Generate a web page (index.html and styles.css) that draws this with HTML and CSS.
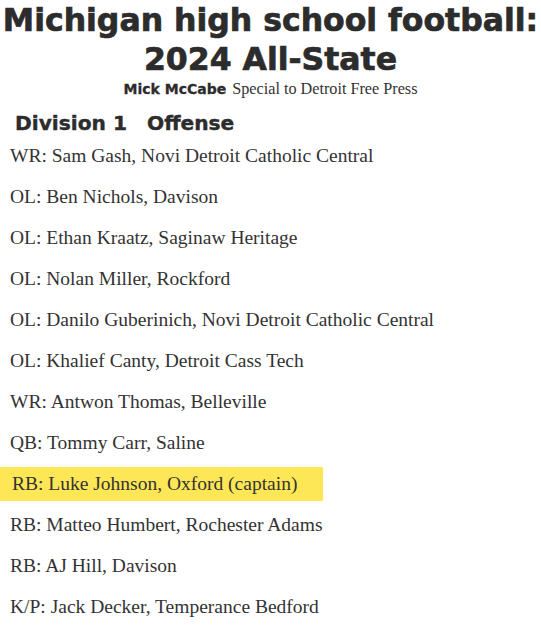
FILE: index.html
```html
<!DOCTYPE html>
<html>
<head>
<meta charset="utf-8">
<link rel="stylesheet" href="styles.css">
</head>
<body>
<header class="head">
  <h1 class="title"><span class="line">Michigan high school football:</span><span class="line">2024 All-State</span></h1>
  <p class="byline"><span class="author">Mick McCabe</span><span class="source">Special to Detroit Free Press</span></p>
</header>
<h2 class="section"><span>Division 1</span><span>Offense</span></h2>
<ul class="roster">
  <li class="row">WR: Sam Gash, Novi Detroit Catholic Central</li>
  <li class="row">OL: Ben Nichols, Davison</li>
  <li class="row">OL: Ethan Kraatz, Saginaw Heritage</li>
  <li class="row">OL: Nolan Miller, Rockford</li>
  <li class="row">OL: Danilo Guberinich, Novi Detroit Catholic Central</li>
  <li class="row">OL: Khalief Canty, Detroit Cass Tech</li>
  <li class="row">WR: Antwon Thomas, Belleville</li>
  <li class="row">QB: Tommy Carr, Saline</li>
  <li class="row captain"><span class="mark">RB: Luke Johnson, Oxford (captain)</span></li>
  <li class="row">RB: Matteo Humbert, Rochester Adams</li>
  <li class="row">RB: AJ Hill, Davison</li>
  <li class="row">K/P: Jack Decker, Temperance Bedford</li>
</ul>
</body>
</html>
```
FILE: styles.css
```css
html, body {
  margin: 0;
  padding: 0;
  background: #fff;
}
body {
  color: #333;
  width: 541px;
  overflow: hidden;
}
.head {
  text-align: center;
}
.title {
  margin: 0;
  padding-top: 1px;
  display: flex;
  flex-direction: column;
  align-items: center;
  font-family: "DejaVu Sans", sans-serif;
  font-weight: 700;
  font-size: 31.5px;
  color: #2c2c2c;
  -webkit-text-stroke: 0.7px #2c2c2c;
}
.line {
  display: block;
  height: 38px;
  line-height: 38px;
  white-space: nowrap;
}
.line + .line {
  margin-top: 1px;
}
.byline {
  margin: 2px 0 0;
  display: flex;
  justify-content: center;
  align-items: baseline;
  gap: 6px;
  line-height: 18px;
}
.author {
  font-family: "DejaVu Sans", sans-serif;
  font-weight: 700;
  font-size: 14px;
  color: #2c2c2c;
  -webkit-text-stroke: 0.3px #2c2c2c;
}
.source {
  font-family: "Liberation Serif", serif;
  font-size: 16.2px;
  color: #333;
}
.section {
  margin: 14px 0 0;
  padding-left: 15px;
  display: flex;
  gap: 20px;
  font-family: "DejaVu Sans", sans-serif;
  font-weight: 700;
  font-size: 20.2px;
  line-height: 23px;
  color: #2c2c2c;
  -webkit-text-stroke: 0.4px #2c2c2c;
}
.roster {
  list-style: none;
  margin: 0;
  padding: 0;
}
.row {
  height: 41px;
  display: flex;
  align-items: center;
  padding-left: 10px;
  font-family: "Liberation Serif", serif;
  font-size: 19.5px;
  color: #333;
}
.captain {
  padding-left: 0;
}
.mark {
  display: flex;
  align-items: center;
  width: 311px;
  height: 34px;
  padding-left: 12px;
  background: #fde756;
}
```
